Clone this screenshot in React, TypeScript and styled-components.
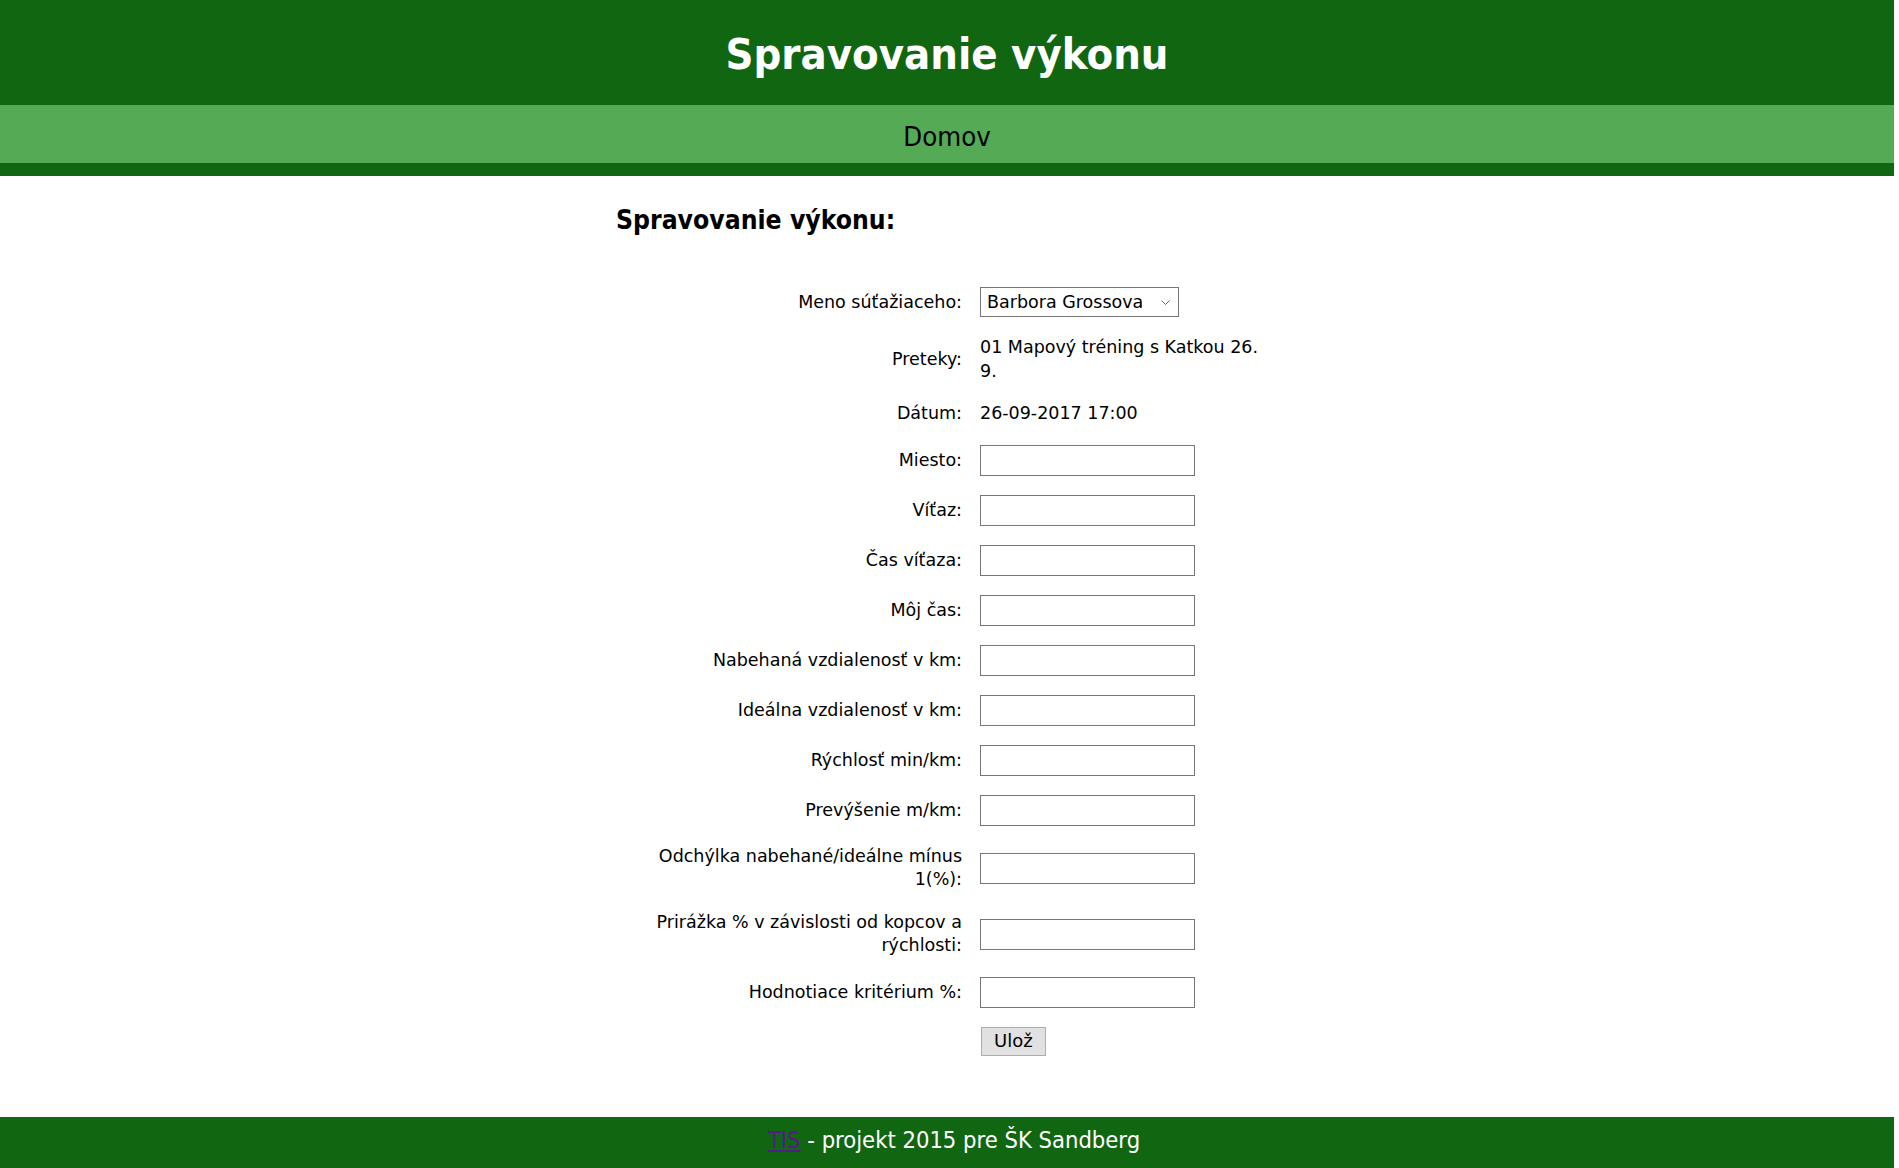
import React from "react";
import styled, { createGlobalStyle } from "styled-components";

const GlobalStyle = createGlobalStyle`
  html, body { margin: 0; padding: 0; background: #ffffff; }
  body { font-family: "DejaVu Sans", Verdana, sans-serif; color: #000; }
`;

const DARK = "#116611";
const LIGHT = "#55aa55";

const Page = styled.div`
  margin-right: 5px;
  display: flex;
  flex-direction: column;
`;

const Header = styled.header`
  background: ${DARK};
  height: 101px;
  padding-top: 4px;
  display: flex;
  align-items: center;
  justify-content: center;
`;

const Title = styled.h1`
  margin: 0;
  font-family: "DejaVu Sans Condensed", "DejaVu Sans", sans-serif;
  font-weight: 700;
  font-size: 43.2px;
  line-height: 1;
  color: #ffffff;
`;

const Nav = styled.nav`
  background: ${LIGHT};
  height: 53px;
  padding-top: 5px;
  border-bottom: 13px solid ${DARK};
  display: flex;
  align-items: center;
  justify-content: center;
`;

const NavLink = styled.a`
  font-family: "DejaVu Sans Condensed", "DejaVu Sans", sans-serif;
  font-size: 27.3px;
  line-height: 1;
  color: #000;
  text-decoration: none;
`;

const Main = styled.main`
  width: 662px;
  margin: 0 auto;
  padding: 28px 0 61.4px;
`;

const Heading = styled.h2`
  margin: 0;
  font-family: "DejaVu Sans Condensed", "DejaVu Sans", sans-serif;
  font-weight: 700;
  font-size: 26.3px;
  line-height: 32px;
  color: #000;
`;

const Form = styled.form`
  margin-top: 51.4px;
  padding-left: 26px;
  display: grid;
  grid-template-columns: 320px 288px;
  column-gap: 18px;
  row-gap: 19px;
  align-items: center;
`;

const Label = styled.label`
  text-align: right;
  font-size: 17.5px;
  line-height: 23.5px;
`;

const Value = styled.div`
  font-size: 17.5px;
  line-height: 23.5px;
`;

const TextInput = styled.input`
  box-sizing: border-box;
  width: 215px;
  height: 31px;
  margin: 0;
  padding: 2px 4px;
  border: 1px solid #767676;
  border-radius: 0;
  background: #fff;
  font-family: "DejaVu Sans", sans-serif;
  font-size: 16px;
  justify-self: start;
`;

const SelectWrap = styled.div`
  position: relative;
  width: 199px;
  height: 30px;
  justify-self: start;
`;

const Select = styled.select`
  appearance: none;
  -webkit-appearance: none;
  box-sizing: border-box;
  width: 100%;
  height: 100%;
  margin: 0;
  padding: 0 20px 0 6px;
  border: 1px solid #767676;
  border-radius: 0;
  background: #fff;
  color: #000;
  font-family: "DejaVu Sans", sans-serif;
  font-size: 17.5px;
`;

const Chevron = styled.svg`
  position: absolute;
  right: 9px;
  top: 13px;
  pointer-events: none;
`;

const SaveButton = styled.button`
  justify-self: start;
  margin-left: 1px;
  height: 29px;
  padding: 0 12px;
  border: 1px solid #adadad;
  border-radius: 0;
  background: #e1e1e1;
  color: #000;
  font-family: "DejaVu Sans", sans-serif;
  font-size: 18px;
  line-height: 1;
`;

const Footer = styled.footer`
  background: ${DARK};
  padding: 9px 0 14px 14px;
  text-align: center;
  color: #ffffff;
  font-family: "DejaVu Sans Condensed", "DejaVu Sans", sans-serif;
  font-size: 23.55px;
  line-height: 28.3px;
`;

const FooterLink = styled.a`
  color: #551a8b;
  text-decoration: underline;
`;

const inputFields = [
  "Miesto:",
  "Víťaz:",
  "Čas víťaza:",
  "Môj čas:",
  "Nabehaná vzdialenosť v km:",
  "Ideálna vzdialenosť v km:",
  "Rýchlosť min/km:",
  "Prevýšenie m/km:",
  "Odchýlka nabehané/ideálne mínus 1(%):",
  "Prirážka % v závislosti od kopcov a rýchlosti:",
  "Hodnotiace kritérium %:",
];

export default function App() {
  return (
    <>
      <GlobalStyle />
      <Page>
        <Header>
          <Title>Spravovanie výkonu</Title>
        </Header>
        <Nav>
          <NavLink href="#">Domov</NavLink>
        </Nav>
        <Main>
          <Heading>Spravovanie výkonu:</Heading>
          <Form onSubmit={(e) => e.preventDefault()}>
            <Label htmlFor="sutaziaci">Meno súťažiaceho:</Label>
            <SelectWrap>
              <Select id="sutaziaci" defaultValue="bg">
                <option value="bg">Barbora Grossova</option>
              </Select>
              <Chevron width="9" height="5" viewBox="0 0 9 5">
                <polyline points="0.5,0.5 4.5,4.5 8.5,0.5" fill="none" stroke="#6d6d6d" strokeWidth="1" />
              </Chevron>
            </SelectWrap>

            <Label>Preteky:</Label>
            <Value>01 Mapový tréning s Katkou 26. 9.</Value>

            <Label>Dátum:</Label>
            <Value>26-09-2017 17:00</Value>

            {inputFields.map((f, i) => (
              <React.Fragment key={f}>
                <Label htmlFor={`f${i}`}>{f}</Label>
                <TextInput id={`f${i}`} type="text" />
              </React.Fragment>
            ))}

            <span />
            <SaveButton type="submit">Ulož</SaveButton>
          </Form>
        </Main>
        <Footer>
          <FooterLink href="#">TIS</FooterLink> - projekt 2015 pre ŠK Sandberg
        </Footer>
      </Page>
    </>
  );
}
